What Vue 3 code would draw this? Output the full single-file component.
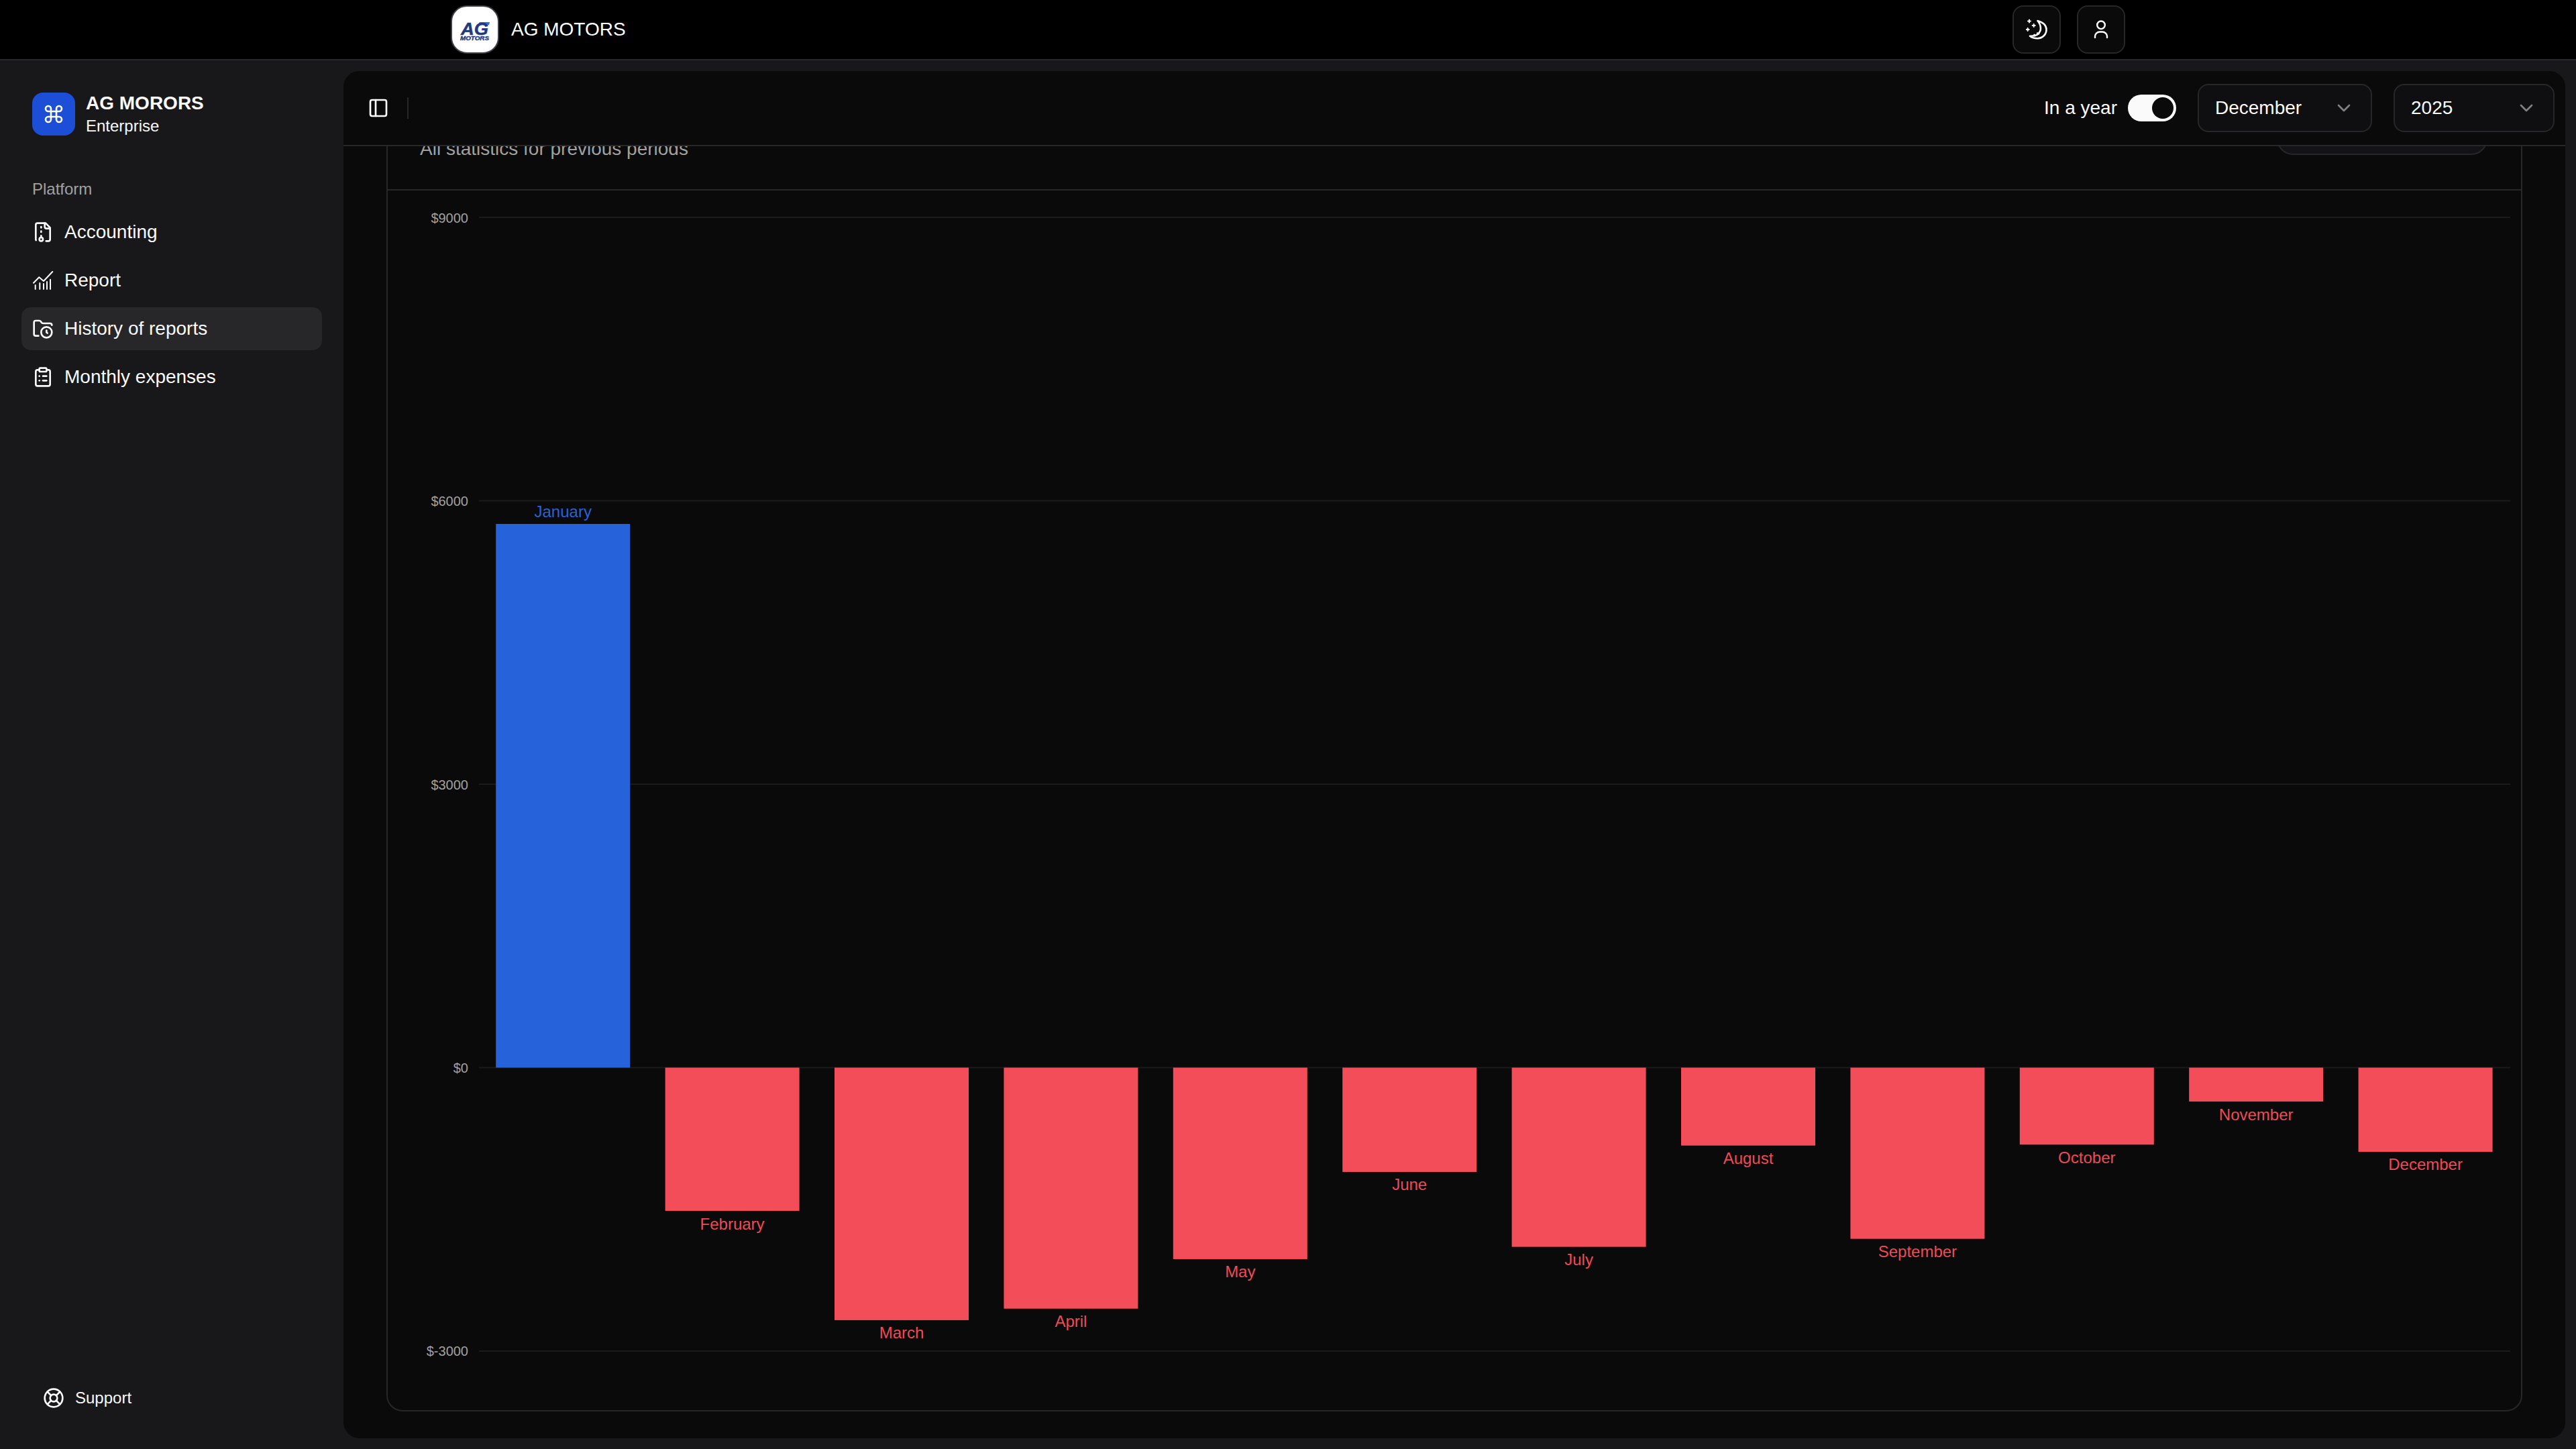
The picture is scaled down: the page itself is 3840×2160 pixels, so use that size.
<script setup>
// chart geometry, in px inside the card's svg (origin = card inner top-left)
const zeroY = 1307.5
const pxPerDollar = 0.140833
const bandStart = 135
const bandWidth = 252.4
const barWidth = 200
const gridLeft = 136
const gridRight = 3164

const ticks = [9000, 6000, 3000, 0, -3000]

const months = [
  { name: 'January', value: 5755 },
  { name: 'February', value: -1516 },
  { name: 'March', value: -2673 },
  { name: 'April', value: -2551 },
  { name: 'May', value: -2027 },
  { name: 'June', value: -1104 },
  { name: 'July', value: -1897 },
  { name: 'August', value: -825 },
  { name: 'September', value: -1812 },
  { name: 'October', value: -815 },
  { name: 'November', value: -359 },
  { name: 'December', value: -891 },
]

const tickY = (v) => zeroY - v * pxPerDollar

const bars = months.map((m, i) => {
  const h = Math.abs(m.value) * pxPerDollar
  const positive = m.value >= 0
  const x = bandStart + i * bandWidth + (bandWidth - barWidth) / 2
  return {
    ...m,
    x,
    y: positive ? zeroY - h : zeroY,
    h,
    cx: x + barWidth / 2,
    labelY: positive ? zeroY - h - 10 : zeroY + h + 27.5,
    color: positive ? '#2662d9' : '#f24d58',
    labelColor: positive ? '#2662d9' : '#ef4a56',
  }
})
</script>

<template>
  <div class="app">
    <header class="topbar">
      <div class="topbar-inner">
        <div class="brand">
          <div class="brand-logo">
            <svg viewBox="0 0 68 68" width="68" height="68">
              <polygon points="41,23 56,23 55,27 38,27" fill="#2f6fdf" />
              <text x="13" y="42" class="logo-ag" textLength="41" lengthAdjust="spacingAndGlyphs">AG</text>
              <text x="12" y="49.5" class="logo-motors" textLength="43" lengthAdjust="spacingAndGlyphs">MOTORS</text>
            </svg>
          </div>
          <span class="brand-name">AG MOTORS</span>
        </div>
        <div class="top-actions">
          <button class="icon-btn">
            <svg class="icon" viewBox="0 0 32 32" fill="none" stroke="currentColor" stroke-width="2.6" stroke-linecap="round" stroke-linejoin="round">
              <path d="M17.5 3c8 2.2 13 6.5 13 13.2 0 7-5.500 12.800-13 13-4.500.1-8.500-1-11.500-3.500 8 .5 13.500-2 15.500-8 1.200-5-.5-10.500-4-14.700z" />
              <path d="M17 21.500l2 1M12.500 24l1 1" />
              <path d="M5 1.500v4M3 3.500h4M11.700 8v4M9.700 10h4M2.700 14v4M.7 16h4" stroke-width="2" />
            </svg>
          </button>
          <button class="icon-btn">
            <svg class="icon" viewBox="0 0 32 32" fill="none" stroke="currentColor" stroke-width="2.4" stroke-linecap="round" stroke-linejoin="round">
              <circle cx="16" cy="9.300" r="5.800" />
              <path d="M7 28v-2a7 7 0 0 1 7-6.500h4a7 7 0 0 1 7 6.500v2" />
            </svg>
          </button>
        </div>
      </div>
    </header>

    <div class="shell">
      <aside class="sidebar">
        <div>
          <div class="team">
            <div class="team-logo">
              <svg class="icon" viewBox="0 0 24 24" fill="none" stroke="currentColor" stroke-width="2" stroke-linecap="round" stroke-linejoin="round">
                <path d="M15 6v12a3 3 0 1 0 3-3H6a3 3 0 1 0 3 3V6a3 3 0 1 0-3 3h12a3 3 0 1 0-3-3" />
              </svg>
            </div>
            <div class="team-text">
              <div class="team-name">AG MORORS</div>
              <div class="team-plan">Enterprise</div>
            </div>
          </div>

          <div class="group-label">Platform</div>
          <nav class="nav">
            <a class="nav-item">
              <svg class="icon" viewBox="0 0 24 24" fill="none" stroke="currentColor" stroke-width="2" stroke-linecap="round" stroke-linejoin="round">
                <path d="M10 12v-1" /><path d="M10 18v-2" /><path d="M10 7V6" />
                <path d="M14 2v4a2 2 0 0 0 2 2h4" />
                <path d="M15.500 22H18a2 2 0 0 0 2-2V7l-5-5H6a2 2 0 0 0-2 2v16a2 2 0 0 0 .274 1.010" />
                <circle cx="10" cy="20" r="2" />
              </svg>
              <span>Accounting</span>
            </a>
            <a class="nav-item">
              <svg class="icon" viewBox="0 0 32 32" fill="none" stroke="currentColor" stroke-width="2" stroke-linecap="round" stroke-linejoin="round">
                <path d="M4.700 29v-6M11.300 29v-9M17 29v-8M22 29V18M27 29V14.700" />
                <path d="M2 19.700l8.300-8.400L17 17 30.300 3" />
              </svg>
              <span>Report</span>
            </a>
            <a class="nav-item active">
              <svg class="icon" viewBox="0 0 24 24" fill="none" stroke="currentColor" stroke-width="2" stroke-linecap="round" stroke-linejoin="round">
                <circle cx="16" cy="16" r="6" />
                <path d="M7 20H4a2 2 0 0 1-2-2V5a2 2 0 0 1 2-2h3.900a2 2 0 0 1 1.690.9l.81 1.200a2 2 0 0 0 1.670.9H20a2 2 0 0 1 2 2" />
                <path d="M16 14v2l1 1" />
              </svg>
              <span>History of reports</span>
            </a>
            <a class="nav-item">
              <svg class="icon" viewBox="0 0 24 24" fill="none" stroke="currentColor" stroke-width="2" stroke-linecap="round" stroke-linejoin="round">
                <rect width="8" height="4" x="8" y="2" rx="1" ry="1" />
                <path d="M16 4h2a2 2 0 0 1 2 2v14a2 2 0 0 1-2 2H6a2 2 0 0 1-2-2V6a2 2 0 0 1 2-2h2" />
                <path d="M12 11h4" /><path d="M12 16h4" /><path d="M8 11h.01" /><path d="M8 16h.01" />
              </svg>
              <span>Monthly expenses</span>
            </a>
          </nav>
        </div>

        <a class="support">
          <svg class="icon" viewBox="0 0 24 24" fill="none" stroke="currentColor" stroke-width="2" stroke-linecap="round" stroke-linejoin="round">
            <circle cx="12" cy="12" r="10" />
            <path d="m4.930 4.930 4.240 4.240" /><path d="m14.830 9.170 4.240-4.240" />
            <path d="m14.830 14.830 4.240 4.240" /><path d="m9.170 14.830-4.240 4.240" />
            <circle cx="12" cy="12" r="4" />
          </svg>
          <span>Support</span>
        </a>
      </aside>

      <main class="main">
        <div class="toolbar">
          <button class="trigger">
            <svg class="icon" viewBox="0 0 24 24" fill="none" stroke="currentColor" stroke-width="2" stroke-linecap="round" stroke-linejoin="round">
              <rect width="18" height="18" x="3" y="3" rx="2" />
              <path d="M9 3v18" />
            </svg>
          </button>
          <div class="separator"></div>
          <div class="filters">
            <span class="switch-label">In a year</span>
            <div class="switch"><div class="thumb"></div></div>
            <div class="select month">
              <span>December</span>
              <svg class="icon chevron" viewBox="0 0 24 24" fill="none" stroke="currentColor" stroke-width="2" stroke-linecap="round" stroke-linejoin="round"><path d="m6 9 6 6 6-6" /></svg>
            </div>
            <div class="select year">
              <span>2025</span>
              <svg class="icon chevron" viewBox="0 0 24 24" fill="none" stroke="currentColor" stroke-width="2" stroke-linecap="round" stroke-linejoin="round"><path d="m6 9 6 6 6-6" /></svg>
            </div>
          </div>
        </div>

        <div class="content">
          <section class="card">
            <div class="card-head">
              <p class="card-desc">All statistics for previous periods</p>
              <div class="card-action"></div>
            </div>
            <svg class="chart" viewBox="0 0 3180 1818" width="3180" height="1818">
              <g v-for="t in ticks" :key="t">
                <line :x1="gridLeft" :x2="gridRight" :y1="tickY(t)" :y2="tickY(t)" stroke="#1b1b1d" stroke-width="2" />
                <text :x="120" :y="tickY(t) + 7.500" text-anchor="end" class="tick">${{ t }}</text>
              </g>
              <g v-for="b in bars" :key="b.name">
                <rect :x="b.x" :y="b.y" :width="barWidth" :height="b.h" :fill="b.color" />
                <text :x="b.cx" :y="b.labelY" text-anchor="middle" class="bar-label" :fill="b.labelColor">{{ b.name }}</text>
              </g>
            </svg>
          </section>
        </div>
      </main>
    </div>
  </div>
</template>

<style>
html,
body {
  margin: 0;
  background: #18181b;
}
</style>

<style scoped>
* {
  box-sizing: border-box;
}

.app {
  width: 3840px;
  height: 2160px;
  display: flex;
  flex-direction: column;
  background: #18181b;
  color: #fafafa;
  font-family: "Liberation Sans", Arial, sans-serif;
  overflow: hidden;
}

.icon {
  width: 32px;
  height: 32px;
  flex-shrink: 0;
  display: block;
}

/* top header */
.topbar {
  height: 90px;
  flex-shrink: 0;
  background: #000;
  border-bottom: 2px solid #27272a;
}

.topbar-inner {
  width: 2496px;
  height: 88px;
  margin: 0 auto;
  padding: 8px 0;
  display: flex;
  align-items: center;
  justify-content: space-between;
}

.brand {
  display: flex;
  align-items: center;
  gap: 18px;
}

.brand-logo {
  width: 72px;
  height: 72px;
  background: #fff;
  border: 2px solid #3f3f46;
  border-radius: 24px;
  overflow: hidden;
}

.logo-ag {
  font-size: 26px;
  font-weight: 700;
  font-style: italic;
  fill: #1f3a7d;
  stroke: #1f3a7d;
  stroke-width: 0.5;
}

.logo-motors {
  font-size: 9px;
  font-weight: 700;
  font-style: italic;
  fill: #1f3a7d;
  stroke: #1f3a7d;
  stroke-width: 0.4;
}

.brand-name {
  font-size: 28px;
  color: #fff;
}

.top-actions {
  display: flex;
  gap: 24px;
}

.icon-btn {
  width: 72px;
  height: 72px;
  display: flex;
  align-items: center;
  justify-content: center;
  padding: 0;
  background: #0a0a0a;
  border: 2px solid #27272a;
  border-radius: 16px;
  color: #fff;
}

/* sidebar */
.shell {
  flex: 1;
  display: flex;
  min-height: 0;
}

.sidebar {
  width: 512px;
  flex-shrink: 0;
  padding: 46px 32px 60px;
  display: flex;
  flex-direction: column;
  justify-content: space-between;
}

.team {
  display: flex;
  align-items: center;
  gap: 16px;
  padding-left: 16px;
}

.team-logo {
  width: 64px;
  height: 64px;
  display: flex;
  align-items: center;
  justify-content: center;
  background: #1d4ed8;
  border-radius: 16px;
  color: #fff;
}

.team-name {
  font-size: 28px;
  line-height: 36px;
  font-weight: 700;
}

.team-plan {
  font-size: 24px;
  line-height: 32px;
}

.group-label {
  height: 64px;
  margin-top: 46px;
  padding-left: 16px;
  display: flex;
  align-items: center;
  font-size: 24px;
  color: #a1a1a1;
}

.nav {
  display: flex;
  flex-direction: column;
  gap: 8px;
}

.nav-item {
  height: 64px;
  padding: 0 16px;
  display: flex;
  align-items: center;
  gap: 16px;
  border-radius: 14px;
  font-size: 28px;
}

.nav-item.active {
  background: #27272a;
}

.support {
  height: 32px;
  padding-left: 32px;
  display: flex;
  align-items: center;
  gap: 16px;
  font-size: 24px;
}

/* main inset */
.main {
  flex: 1;
  min-width: 0;
  margin: 16px 16px 16px 0;
  background: #0a0a0a;
  border-radius: 24px;
  overflow: hidden;
  display: flex;
  flex-direction: column;
}

.toolbar {
  height: 112px;
  flex-shrink: 0;
  padding: 0 16px 0 36px;
  display: flex;
  align-items: center;
  border-bottom: 2px solid #27272a;
  position: relative;
  z-index: 1;
  background: #0a0a0a;
}

.trigger {
  width: 32px;
  height: 32px;
  padding: 0;
  background: none;
  border: none;
  color: #fff;
}

.separator {
  width: 2px;
  height: 32px;
  margin-left: 27px;
  background: #27272a;
}

.filters {
  margin-left: auto;
  display: flex;
  align-items: center;
}

.switch-label {
  font-size: 28px;
  margin-right: 16px;
}

.switch {
  width: 72px;
  height: 40px;
  padding: 4px;
  background: #fafafa;
  border-radius: 20px;
  display: flex;
  justify-content: flex-end;
  margin-right: 32px;
}

.thumb {
  width: 32px;
  height: 32px;
  border-radius: 50%;
  background: #0a0a0a;
}

.select {
  height: 72px;
  padding: 0 24px;
  display: flex;
  align-items: center;
  justify-content: space-between;
  background: #0f0f11;
  border: 2px solid #27272a;
  border-radius: 16px;
  font-size: 28px;
}

.select.month {
  width: 260px;
  margin-right: 32px;
}

.select.year {
  width: 240px;
}

.chevron {
  color: #808083;
}

/* scrolled content, card top sits behind the toolbar */
.content {
  flex: 1;
  min-height: 0;
  overflow: hidden;
  padding: 0 64px 40px;
}

.card {
  height: calc(100% + 60px);
  margin-top: -60px;
  border: 2px solid #27272a;
  border-radius: 24px;
  display: flex;
  flex-direction: column;
}

.card-head {
  height: 124px;
  flex-shrink: 0;
  padding: 0 50px 40px 48px;
  display: flex;
  align-items: flex-end;
  justify-content: space-between;
  border-bottom: 2px solid #27272a;
}

.card-desc {
  margin: 0;
  font-size: 28px;
  line-height: 40px;
  color: #a1a1a1;
}

.card-action {
  width: 314px;
  height: 72px;
  margin-bottom: 11px;
  background: #131315;
  border: 2px solid #27272a;
  border-radius: 24px;
}

.chart {
  display: block;
  flex: 1;
}

.tick {
  font-size: 20px;
  fill: #a1a1a1;
}

.bar-label {
  font-size: 24px;
}
</style>
